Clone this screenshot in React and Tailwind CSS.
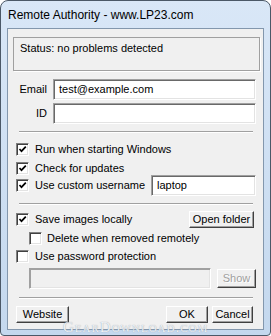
import React from "react";

const font = { fontFamily: '"Liberation Sans", Arial, sans-serif' };

// classic sunken text box
function Field({ className = "", children, disabled }) {
  return (
    <div
      className={`h-[21px] flex items-center px-[5px] text-[11px] text-black border border-t-[#a0a0a0] border-l-[#a0a0a0] border-b-white border-r-white shadow-[inset_1px_1px_0_#696969,inset_-1px_-1px_0_#e3e3e3] ${
        disabled ? "bg-[#f0f0f0] shadow-[inset_1px_1px_0_#a0a0a0,inset_-1px_-1px_0_#e3e3e3]" : "bg-white"
      } ${className}`}
    >
      {children}
    </div>
  );
}

function Check({ checked }) {
  return (
    <div className="w-[13px] h-[13px] shrink-0 bg-white border border-t-[#808080] border-l-[#808080] border-b-white border-r-white shadow-[inset_1px_1px_0_#404040,inset_-1px_-1px_0_#e3e3e3] flex items-center justify-center">
      {checked && (
        <svg width="9" height="9" viewBox="0 0 9 9">
          <path d="M1.5 4 L3.5 6.2 L7.8 1.6" fill="none" stroke="#000" strokeWidth="1.7" />
        </svg>
      )}
    </div>
  );
}

function Button({ className = "", children, disabled }) {
  return (
    <div
      className={`h-[17px] flex items-center justify-center text-[11px] bg-[#f0f0f0] border border-t-white border-l-white border-b-[#404040] border-r-[#404040] shadow-[inset_-1px_-1px_0_#a0a0a0] ${
        disabled ? "text-[#a0a0a0] [text-shadow:1px_1px_0_#fff]" : "text-black"
      } ${className}`}
    >
      {children}
    </div>
  );
}

function Separator() {
  return <div className="ml-[11px] w-[234px] h-[2px] border-t border-[#a0a0a0] border-b border-b-white" />;
}

function CheckRow({ checked, label, className = "", children }) {
  return (
    <div className={`flex items-center ${className}`}>
      <Check checked={checked} />
      <span className="ml-[6px] text-[11px] text-black whitespace-nowrap">{label}</span>
      {children}
    </div>
  );
}

export default function App() {
  return (
    <div className="w-[271px] h-[336px] relative" style={font}>
      <div className="w-full h-full flex flex-col rounded-t-[8px] rounded-b-[4px] border border-[#4b5867] bg-gradient-to-b from-[#d9e7f7] to-[#c4d8ee]">
        {/* title bar */}
        <div className="h-[27px] shrink-0 flex items-center pl-[7px] pt-[1px] text-[12px] text-black">
          Remote Authority - www.LP23.com
        </div>

        {/* client area */}
        <div className="mx-[6px] h-[302px] border border-[#8397ad] bg-[#f0f0f0] flex flex-col">
          {/* status */}
          <div className="mt-[8px] ml-[5px] w-[247px] h-[34px] border border-[#a0a0a0] shadow-[1px_1px_0_#fff] px-[6px] pt-[2px] text-[11px] text-black">
            Status: no problems detected
          </div>

          <div className="mt-[8px] flex items-center">
            <span className="w-[45px] pr-[6px] text-right text-[11px] text-black">Email</span>
            <Field className="w-[203px]">test@example.com</Field>
          </div>
          <div className="mt-[3px] flex items-center">
            <span className="w-[45px] pr-[6px] text-right text-[11px] text-black">ID</span>
            <Field className="w-[203px]" />
          </div>

          <div className="mt-[7px]">
            <Separator />
          </div>

          <div className="pl-[8px] pr-[7px]">
            <CheckRow checked label="Run when starting Windows" className="mt-[10px] h-[13px]" />
            <CheckRow checked label="Check for updates" className="mt-[6px] h-[13px]" />
            <CheckRow checked label="Use custom username" className="h-[21px]">
              <Field className="ml-auto w-[105px]">laptop</Field>
            </CheckRow>
          </div>

          <div className="mt-[7px]">
            <Separator />
          </div>

          <div className="pl-[8px] pr-[9px]">
            <CheckRow checked label="Save images locally" className="mt-[6px] h-[17px]">
              <Button className="ml-auto w-[65px]">Open folder</Button>
            </CheckRow>
          </div>
          <div className="pl-[21px]">
            <div className="mt-[4px] h-[13px] flex items-center">
              <Check />
              <span className="ml-[5px] text-[11px] text-black whitespace-nowrap">Delete when removed remotely</span>
            </div>
          </div>
          <div className="pl-[8px]">
            <CheckRow label="Use password protection" className="mt-[5px] h-[13px]" />
          </div>
          <div className="mt-[5px] pl-[21px] pr-[7px] flex items-center">
            <Field disabled className="w-[182px] h-[20px]" />
            <Button disabled className="ml-auto w-[39px] h-[19px]">Show</Button>
          </div>

          <div className="mt-[8px]">
            <Separator />
          </div>

          <div className="mt-[7px] pl-[8px] pr-[10px] flex items-center">
            <Button className="w-[53px]">Website</Button>
            <Button className="ml-auto w-[42px] border-[#000] border-t-white border-l-white">OK</Button>
            <Button className="ml-[4px] w-[41px]">Cancel</Button>
          </div>
        </div>
      </div>

      {/* watermark */}
      <div
        className="absolute left-[63px] top-[320px] text-[15px] leading-[15px] text-[#eef1f5] [font-variant:small-caps] tracking-[1px] [text-shadow:0_0_1px_#8c97a4]"
        style={{ fontFamily: '"Liberation Serif", "Times New Roman", serif' }}
      >
        GearDownload.com
      </div>
    </div>
  );
}
